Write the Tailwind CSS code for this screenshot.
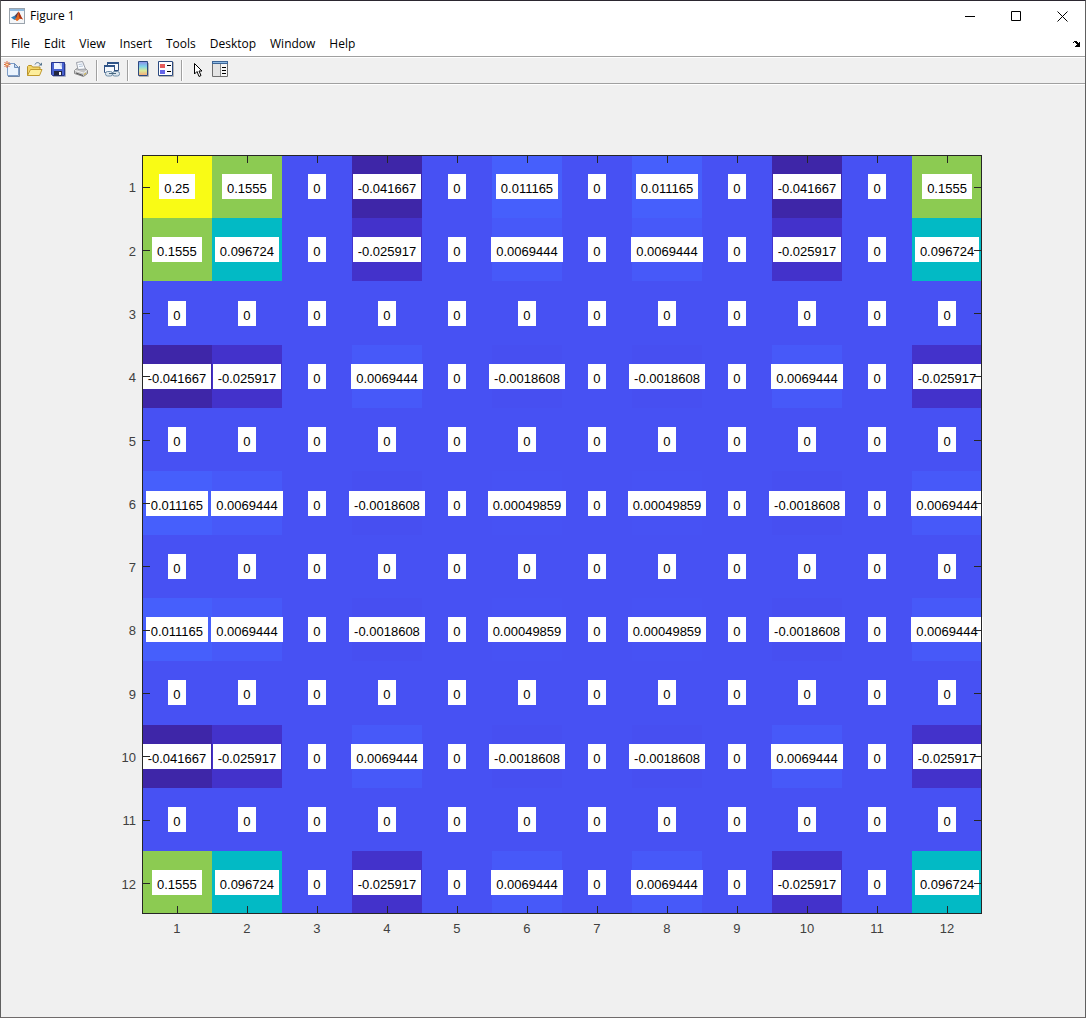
<!DOCTYPE html>
<html lang="en">
<head>
    <meta charset="UTF-8">
    <meta name="viewport" content="width=device-width, initial-scale=1.0">
    <title>Figure 1</title>
    <script src="https://cdn.jsdelivr.net/npm/@tailwindcss/browser@4"></script>
</head>
<body class="bg-[#f0f0f0]">
    <div class="flex min-h-screen flex-col border border-t-[#2b2730] border-x-[#606060] border-b-[#6f6b6b] font-['Open_Sans','Noto_Sans',sans-serif] text-xs text-black">

        <header class="flex h-[30px] items-center bg-white pl-2">
            <svg class="size-4 shrink-0" viewBox="0 0 16 16">
                <rect x="0.5" y="0.5" width="15" height="15" fill="#f4f6f8" stroke="#9aa3ac"/>
                <path d="M1 1h14v2H1z" fill="#8fb8dc"/>
                <path d="M2 9.5 6 7.5 8 9.5 5.5 12z" fill="#2f7cb8"/>
                <path d="M6 7.5 9.5 3.5 8.5 9 7 10.5z" fill="#5a3b48"/>
                <path d="M9.5 3.5C11 5 12 9 14 11.5 12 10.5 11 10.5 9.5 12 8.5 13 7.5 13.5 7 12L5.5 12C7.5 10.5 8.5 7 9.5 3.5z" fill="#e2661c"/>
                <path d="M9.5 3.5C9.5 7 10 9 11 10.5 12 10.5 13 11 14 11.5 12 9 11 5 9.5 3.5z" fill="#a8321a"/>
            </svg>
            <h1 class="ml-[5px] flex-1">Figure 1</h1>
            <button class="flex h-full w-[46px] items-center justify-center" aria-label="Minimize">
                <svg class="size-[11px]" viewBox="0 0 11 11" shape-rendering="crispEdges"><path d="M0 5h10v1H0z"/></svg>
            </button>
            <button class="flex h-full w-[46px] items-center justify-center" aria-label="Maximize">
                <svg class="size-[11px]" viewBox="0 0 11 11" fill="none" stroke="#000"><path d="M0.5 0.5h9v9h-9z"/></svg>
            </button>
            <button class="flex h-full w-[46px] items-center justify-center" aria-label="Close">
                <svg class="size-[11px]" viewBox="0 0 11 11" fill="none" stroke="#000"><path d="M0.5 0.5l10 10M10.5 0.5l-10 10"/></svg>
            </button>
        </header>

        <nav class="flex h-[25px] items-center bg-white pr-[5px] pl-[3px]">
            <button class="px-[7px]">File</button>
            <button class="px-[7px]">Edit</button>
            <button class="px-[7px]">View</button>
            <button class="px-[7px]">Insert</button>
            <button class="px-[7px]">Tools</button>
            <button class="px-[7px]">Desktop</button>
            <button class="px-[7px]">Window</button>
            <button class="px-[7px]">Help</button>
            <button class="ml-auto" aria-label="Dock figure">
                <svg class="h-[6px] w-[7px]" viewBox="0 0 7 6" shape-rendering="crispEdges"><path d="M1 0h3v1h1v1h1V1h1v5H2V5h1V4h1V3H3V2H2V1H1v1H0V1h1z"/></svg>
            </button>
        </nav>

        <div class="flex h-7 items-start border-y border-[#a0a0a0] bg-[#f0f0f0] pt-[3px] shadow-[inset_0_1px_0_#fff]" role="toolbar">
            <button class="w-[23px] pt-px pl-[3px]" aria-label="New figure">
                <svg class="size-4" viewBox="0 0 16 16">
                    <path d="M4 15.5h11.5V5" fill="none" stroke="#6f87a8"/>
                    <path d="M3.5 2.5h7l4 4v8h-11z" fill="#eaf3fd" stroke="#7d9cc6"/>
                    <path d="M10.5 2.5v4h4z" fill="#c3d8f0" stroke="#6c8cb8"/>
                    <path d="M3 0v1.5M3 5v2M0 3.5h1.5M5 3.5h1.5M0.5 1l1 1M5.5 1l-1 1M0.5 6l1-1M5.5 6l-1-1" stroke="#d9663a"/>
                    <circle cx="3" cy="3.5" r="1.5" fill="#ffe0a0" stroke="#e06a35"/>
                </svg>
            </button>
            <button class="w-[23px] pt-px pl-[3px]" aria-label="Open file">
                <svg class="size-4" viewBox="0 0 16 16">
                    <path d="M0.5 14.5v-9l1-1h3l1 1.5h7.5v3" fill="#f3d568" stroke="#b8922a"/>
                    <path d="M0.5 14.5 3.5 8.5h11.5L12.5 14.5z" fill="#fdee9c" stroke="#c19a2e"/>
                    <path d="M8 3.5C9 1 12 1 13.5 3.5" fill="none" stroke="#55758f"/>
                    <path d="M11.5 4.5h3.500V1.500z" fill="#55758f"/>
                </svg>
            </button>
            <button class="w-[23px] pt-px pl-[3px]" aria-label="Save figure">
                <svg class="size-4" viewBox="0 0 16 16">
                    <path d="M3 15.5h12.5V3" fill="none" stroke="#a9afc4"/>
                    <path d="M1.5 1.5h13v13h-12l-1-1z" fill="#4862d0" stroke="#27358f"/>
                    <path d="M4 2h8v6H4z" fill="#eef3ff"/>
                    <path d="M9 2h3v5z" fill="#c3d0f2"/>
                    <path d="M4 10h8v4.5H4z" fill="#22263e"/>
                    <path d="M9 11h2v3H9z" fill="#f4f4f4"/>
                </svg>
            </button>
            <button class="w-[23px] pt-px pl-[3px]" aria-label="Print figure">
                <svg class="size-4" viewBox="0 0 16 16">
                    <path d="M1.5 9.5 4 7.5h8l2.5 2v3L10.5 15.5 1.5 12.5z" fill="#c4c4c4" stroke="#8a8a8a"/>
                    <path d="M5 8.5 3.5 1.5 9.5 0.5 12.5 8z" fill="#fafcff" stroke="#9b9fa8"/>
                    <path d="M5.5 3.5l4-.5M6 5.5l4-.5" stroke="#b4c4d8"/>
                    <path d="M2 9.5 10.5 12 14 9.5" fill="none" stroke="#f2f2f2"/>
                    <path d="M3 12l7 2.5" stroke="#555"/>
                    <path d="M11 13.5l2-1.2" stroke="#d8b83a"/>
                </svg>
            </button>
            <div class="mx-[3px] h-[21px] w-[2px] border-l border-[#a0a0a0] bg-white"></div>
            <button class="w-[23px] pt-px pl-[3px]" aria-label="Link plot">
                <svg class="size-4" viewBox="0 0 16 16">
                    <path d="M3.5 1.5h11v8h-11z" fill="#f6f9fd" stroke="#31507e"/>
                    <path d="M3 1h12v2H3z" fill="#2f5488"/>
                    <path d="M0.5 4.5h10v7h-10z" fill="#f6f9fd" stroke="#31507e"/>
                    <path d="M0 4h11v2H0z" fill="#2f5488"/>
                    <rect x="1.5" y="10.5" width="7" height="4.5" rx="2" fill="#dce6ee" stroke="#6f8ea8"/>
                    <rect x="8.5" y="10.5" width="7" height="4.5" rx="2" fill="#dce6ee" stroke="#6f8ea8"/>
                    <path d="M5 12.5h7" stroke="#48677f"/>
                </svg>
            </button>
            <div class="mx-[3px] h-[21px] w-[2px] border-l border-[#a0a0a0] bg-white"></div>
            <button class="w-[23px] pt-px pl-[3px]" aria-label="Insert colorbar">
                <svg class="size-4" viewBox="0 0 16 16">
                    <defs>
                        <linearGradient id="bar" x1="0" y1="0" x2="0" y2="1">
                            <stop offset="0" stop-color="#8d8be8"/>
                            <stop offset="0.35" stop-color="#7fd4e8"/>
                            <stop offset="0.65" stop-color="#d9ea9a"/>
                            <stop offset="1" stop-color="#f5a878"/>
                        </linearGradient>
                    </defs>
                    <path d="M4 15.5h9.5V2" fill="none" stroke="#b5b5b5"/>
                    <path d="M3.5 0.5h9v14h-9z" fill="url(#bar)" stroke="#2c4a80"/>
                </svg>
            </button>
            <button class="w-[23px] pt-px pl-[3px]" aria-label="Insert legend">
                <svg class="size-4" viewBox="0 0 16 16">
                    <path d="M1 15.5h14.5V1" fill="none" stroke="#b5b5b5"/>
                    <path d="M0.5 0.5h14v14H0.5z" fill="#fbfcff" stroke="#2c4a80"/>
                    <path d="M2 3h5v4H2z" fill="#e45b5b"/>
                    <path d="M2 9h5v4H2z" fill="#6464e8"/>
                    <path d="M9 4.5h4M9 10.5h4" stroke="#000"/>
                </svg>
            </button>
            <div class="mx-[3px] h-[21px] w-[2px] border-l border-[#a0a0a0] bg-white"></div>
            <button class="w-[23px] pt-px pl-[3px]" aria-label="Edit plot">
                <svg class="size-4" viewBox="0 0 16 16">
                    <path d="M5.5 2.5v10.500l2.500-2.500 2 5 2-1-2-4.500h3z" fill="#fff" stroke="#000"/>
                </svg>
            </button>
            <button class="w-[23px] pt-px pl-[3px]" aria-label="Open property inspector">
                <svg class="size-4" viewBox="0 0 16 16">
                    <path d="M0.5 0.5h15v15H0.5z" fill="#e4e4e4" stroke="#6e6e6e"/>
                    <path d="M0 0h16v3H0z" fill="#3d6596"/>
                    <path d="M1 1h14v1H1z" fill="#8ebbe4"/>
                    <path d="M8.5 3v12" stroke="#8a8a8a"/>
                    <path d="M9 3h6v12H9z" fill="#f6f6f6"/>
                    <path d="M10 6.5h4M10 9.5h4M10 12.5h4" stroke="#000"/>
                </svg>
            </button>
        </div>

        <!-- Default axes position inside the figure: [0.13 0.11 0.775 0.815] -->
        <table class="grid flex-1 grid-cols-[312fr_repeat(12,155fr)_228fr] grid-rows-[180fr_repeat(12,163fr)_264fr] border-t border-white bg-[#f0f0f0] font-['Liberation_Sans',Arial,sans-serif] text-[13px]">
            <!-- empty head keeps the margin above the axes -->
            <thead class="col-span-full block"></thead>
            <tbody id="rows" class="contents"></tbody>
            <tfoot class="contents">
                <tr id="columns" class="contents"></tr>
            </tfoot>
        </table>
    </div>

    <script>
        // Weight group of each row/column: the matrix is an outer product, so it only has a few distinct values
        const groups = ['a', 'b', '0', 'c', '0', 'd', '0', 'd', '0', 'c', '0', 'b'];

        const values = {
            aa: '0.25', ab: '0.1555', ac: '-0.041667', ad: '0.011165',
            bb: '0.096724', bc: '-0.025917', bd: '0.0069444',
            cc: '0.0069444', cd: '-0.0018608', dd: '0.00049859',
        };

        const colors = {
            '0.25': 'bg-[#f9fb15]',
            '0.1555': 'bg-[#8ccb52]',
            '0.096724': 'bg-[#02bac5]',
            '0.011165': 'bg-[#465ffc]',
            '0.0069444': 'bg-[#4759f9]',
            '0.00049859': 'bg-[#4752f4]',
            '0': 'bg-[#4751f3]',
            '-0.0018608': 'bg-[#474ff1]',
            '-0.025917': 'bg-[#4332cb]',
            '-0.041667': 'bg-[#3e26a8]',
        };

        const rows = document.getElementById('rows');
        const columns = document.getElementById('columns');
        const last = groups.length - 1;

        groups.forEach((rowGroup, r) => {
            const row = document.createElement('tr');
            row.className = 'contents';

            const rowLabel = `<th scope="row" class="col-start-1 flex items-center justify-end pt-[3px] pr-[6px] font-normal text-[#404040]">${r + 1}</th>`;

            const cells = groups.map((colGroup, c) => {
                const value = values[[rowGroup, colGroup].sort().join('')] || '0';
                let edge = '';
                let ticks = '';
                if (r === 0) {
                    edge += ' after:border-t';
                    ticks += '<i class="absolute top-0 left-1/2 z-20 h-2 w-px bg-[#262626]"></i>';
                }
                if (r === last) {
                    edge += ' after:border-b';
                    ticks += '<i class="absolute bottom-0 left-1/2 z-20 h-2 w-px bg-[#262626]"></i>';
                }
                if (c === 0) {
                    edge += ' after:border-l';
                    ticks += '<i class="absolute top-1/2 left-0 z-20 h-px w-2 bg-[#262626]"></i>';
                }
                if (c === last) {
                    edge += ' after:border-r';
                    ticks += '<i class="absolute top-1/2 right-0 z-20 h-px w-2 bg-[#262626]"></i>';
                }
                return `
                    <td class="relative flex min-w-0 items-center justify-center after:absolute after:inset-0 after:z-20 after:border-[#262626] ${colors[value]}${edge}">
                        <span class="relative z-10 shrink-0 bg-white px-[5px] pt-1 leading-[21px]">${value}</span>${ticks}
                    </td>`;
            });

            row.innerHTML = rowLabel + cells.join('');
            rows.appendChild(row);

            const start = r === 0 ? 'col-start-2' : '';
            columns.innerHTML += `<th scope="col" class="${start} pt-[6px] text-center font-normal text-[#404040]">${r + 1}</th>`;
        });
    </script>
</body>
</html>
